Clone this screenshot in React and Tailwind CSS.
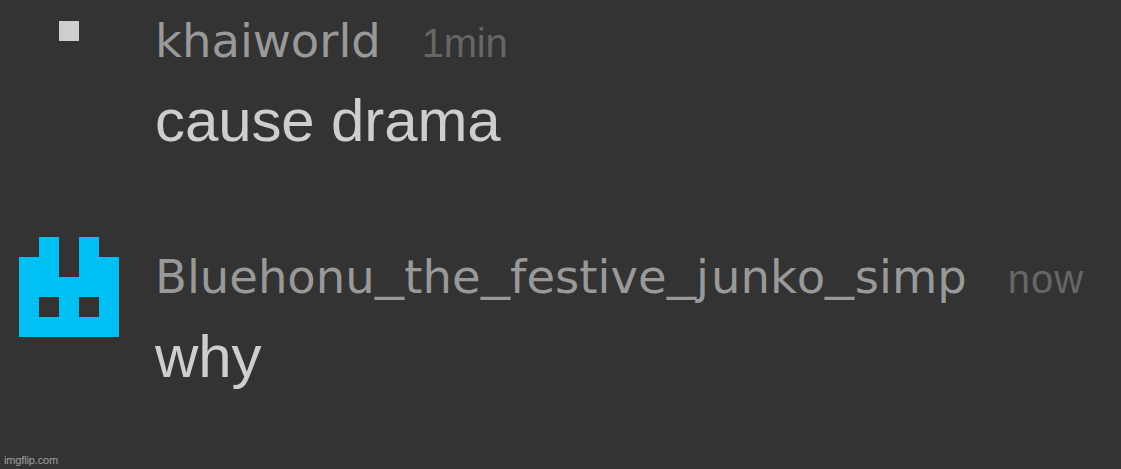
import React from 'react';

const AVATARS = {
  khai: {
    color: '#cecece',
    rows: ['.....', '..#..', '.....', '.....', '.....'],
  },
  blue: {
    color: '#00bff3',
    rows: ['.#.#.', '##.##', '#####', '#.#.#', '#####'],
  },
};

const comments = [
  { id: 1, user: 'khaiworld', time: '1min', timeClass: 'tracking-[-0.3px]', text: 'cause drama', avatar: AVATARS.khai },
  { id: 2, user: 'Bluehonu_the_festive_junko_simp', time: 'now', timeClass: 'tracking-[1px]', text: 'why', avatar: AVATARS.blue },
];

const PixelAvatar = ({ color, rows }) => (
  <svg className="w-[100px] h-[100px] shrink-0" viewBox="0 0 5 5" shapeRendering="crispEdges" fill={color}>
    {rows.map((row, y) =>
      row.split('').map((cell, x) =>
        cell === '#' ? <rect key={`${x}-${y}`} x={x} y={y} width="1" height="1" /> : null
      )
    )}
  </svg>
);

// Underscores are wider and sit closer to the baseline than the font's own
const Username = ({ name }) => (
  <span className="font-['DejaVu_Sans',sans-serif] text-[46.5px] [font-kerning:none] text-[#999999]">
    {name.split(/(_|j)/).map((part, i) => {
      if (part === '_') {
        return (
          <span key={i} className="inline-block w-[29.5px] origin-left scale-x-[1.25] -translate-y-1">_</span>
        );
      }
      if (part === 'j') return <span key={i} className="mr-[2px]">j</span>;
      return <span key={i}>{part}</span>;
    })}
  </span>
);

const Comment = ({ user, time, timeClass, text, avatar }) => (
  <article className="flex h-[236px] pl-[19px] pt-px">
    <PixelAvatar color={avatar.color} rows={avatar.rows} />
    <div className="ml-9 pt-3 whitespace-nowrap">
      <div className="flex items-baseline gap-[41px] h-14 leading-[56px]">
        <Username name={user} />
        <span className={`font-['Liberation_Sans',sans-serif] text-[40px] text-[#666666] ${timeClass}`}>{time}</span>
      </div>
      <p className="mt-4 font-['Liberation_Sans',sans-serif] text-[60px] leading-[72px] tracking-[-0.12px] text-[#cecece]">{text}</p>
    </div>
  </article>
);

export default function App() {
  return (
    <main className="relative w-[1121px] h-[469px] overflow-hidden bg-[#333333]">
      {comments.map((comment) => (
        <Comment key={comment.id} {...comment} />
      ))}
      <span className="absolute left-1 bottom-[2px] font-['Liberation_Sans',sans-serif] text-[11px] leading-[13px] tracking-[-0.15px] text-[#a0a0a0]">
        imgflip.com
      </span>
    </main>
  );
}
